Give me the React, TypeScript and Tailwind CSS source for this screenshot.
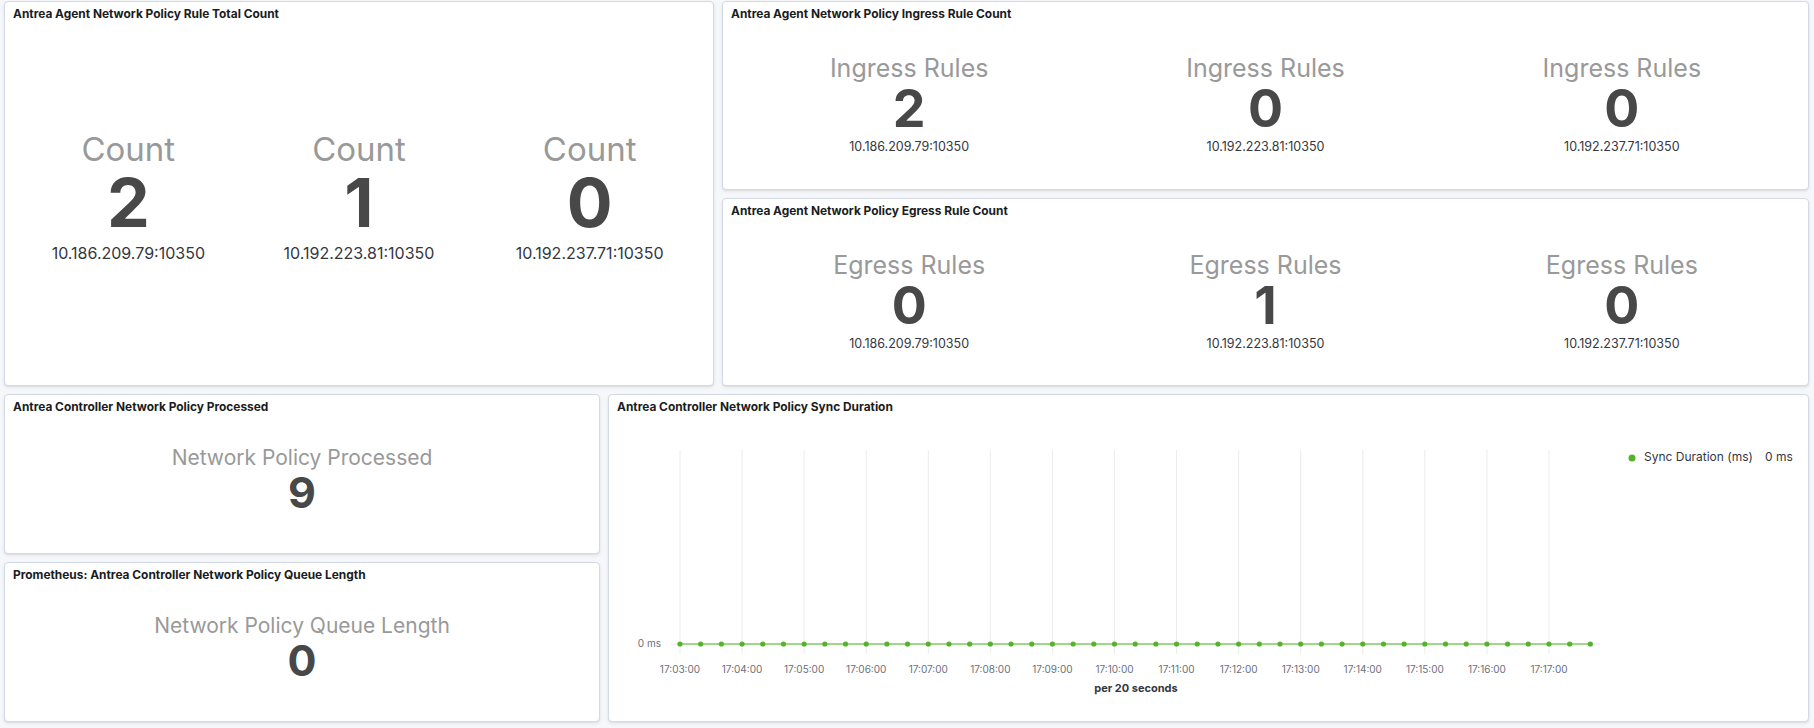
import React from "react";

const FONT = { fontFamily: "Inter, 'Noto Sans', sans-serif" };

function Panel({ title, children, className }: { title: string; children?: React.ReactNode; className?: string }) {
  return (
    <div
      className={
        "bg-white border border-[#d3dae6] rounded-[4px] shadow-[0_1px_2px_rgba(0,0,0,0.08),0_2px_4px_rgba(0,0,0,0.04)] flex flex-col overflow-hidden min-h-0 " +
        (className ?? "")
      }
    >
      <div className="px-[8px] pt-[4px] text-[11.9px] leading-[16px] font-bold text-[#1a1c21] whitespace-nowrap">{title}</div>
      {children}
    </div>
  );
}

type M = { value: string; ip: string };

function MetricRow({ label, items, big }: { label: string; items: M[]; big: boolean }) {
  return (
    <div className={"grid grid-cols-3 px-[8px] " + (big ? "pt-[111px]" : "pt-[34px]")}>
      {items.map((m, i) => (
        <div key={i} className="flex flex-col items-center">
          <div className={"leading-none text-[#999999] whitespace-nowrap " + (big ? "text-[33px]" : "text-[25px]")}>{label}</div>
          <div className={"leading-none font-bold text-[#484848] " + (big ? "text-[68px] mt-[2px]" : "text-[52px] mt-[2px]")}>{m.value}</div>
          <div className={"leading-none text-[#343741] whitespace-nowrap " + (big ? "text-[16px] mt-[9px]" : "text-[12.5px] mt-[6px]")}>{m.ip}</div>
        </div>
      ))}
    </div>
  );
}

function Single({ label, value }: { label: string; value: string }) {
  return (
    <div className="flex flex-col items-center pt-[32px]">
      <div className="leading-none text-[21px] text-[#999999] whitespace-nowrap">{label}</div>
      <div className="leading-none text-[43px] font-bold text-[#484848] mt-[3px]">{value}</div>
    </div>
  );
}

const IPS = ["10.186.209.79:10350", "10.192.223.81:10350", "10.192.237.71:10350"];

function Chart() {
  const x0 = 71;
  const minute = 62.07;
  const grid = Array.from({ length: 15 }, (_, i) => x0 + i * minute);
  const pts = Array.from({ length: 45 }, (_, j) => x0 + (j * minute) / 3);
  const labels = Array.from({ length: 15 }, (_, i) => `17:${String(3 + i).padStart(2, "0")}:00`);
  return (
    <svg width="1199" height="306" className="block" style={FONT}>
      {grid.map((x, i) => (
        <line key={i} x1={x} x2={x} y1={35} y2={239} stroke="#ececec" strokeWidth={1} />
      ))}
      <line x1={62} x2={991} y1={229} y2={229} stroke="#e6e6e6" strokeWidth={1} />
      <line x1={pts[0]} x2={pts[pts.length - 1]} y1={229} y2={229} stroke="#86cd62" strokeWidth={1.5} />
      {pts.map((x, j) => (
        <circle key={j} cx={x} cy={229} r={2.6} fill="#54b32a" />
      ))}
      <text x={52} y={229} textAnchor="end" dominantBaseline="middle" fontSize={10} fill="#69707d">
        0 ms
      </text>
      {grid.map((x, i) => (
        <text key={i} x={x} y={255} textAnchor="middle" dominantBaseline="middle" fontSize={10} fill="#69707d">
          {labels[i]}
        </text>
      ))}
      <text x={527} y={274} textAnchor="middle" dominantBaseline="middle" fontSize={11} fontWeight={700} fill="#343741">
        per 20 seconds
      </text>
      <circle cx={1023} cy={43} r={3.5} fill="#54b32a" />
      <text x={1035} y={43} dominantBaseline="middle" fontSize={12} fill="#343741">
        Sync Duration (ms)
      </text>
      <text x={1156} y={43} dominantBaseline="middle" fontSize={12} fill="#343741">
        0 ms
      </text>
    </svg>
  );
}

export default function App() {
  return (
    <div className="w-[1814px] h-[728px] bg-[#f5f7fa] pt-[1px] pl-[4px] pr-[5px] flex flex-col gap-[8px] overflow-hidden" style={FONT}>
      <div className="grid grid-cols-[710px_1fr] gap-[8px] h-[385px] shrink-0">
        <Panel title="Antrea Agent Network Policy Rule Total Count">
          <MetricRow
            label="Count"
            big
            items={[
              { value: "2", ip: IPS[0] },
              { value: "1", ip: IPS[1] },
              { value: "0", ip: IPS[2] },
            ]}
          />
        </Panel>
        <div className="grid grid-rows-2 gap-[8px] min-h-0">
          <Panel title="Antrea Agent Network Policy Ingress Rule Count">
            <MetricRow
              label="Ingress Rules"
              big={false}
              items={[
                { value: "2", ip: IPS[0] },
                { value: "0", ip: IPS[1] },
                { value: "0", ip: IPS[2] },
              ]}
            />
          </Panel>
          <Panel title="Antrea Agent Network Policy Egress Rule Count">
            <MetricRow
              label="Egress Rules"
              big={false}
              items={[
                { value: "0", ip: IPS[0] },
                { value: "1", ip: IPS[1] },
                { value: "0", ip: IPS[2] },
              ]}
            />
          </Panel>
        </div>
      </div>
      <div className="grid grid-cols-[596px_1fr] gap-[8px] h-[328px] shrink-0">
        <div className="grid grid-rows-2 gap-[8px] min-h-0">
          <Panel title="Antrea Controller Network Policy Processed">
            <Single label="Network Policy Processed" value="9" />
          </Panel>
          <Panel title="Prometheus: Antrea Controller Network Policy Queue Length">
            <Single label="Network Policy Queue Length" value="0" />
          </Panel>
        </div>
        <Panel title="Antrea Controller Network Policy Sync Duration">
          <Chart />
        </Panel>
      </div>
    </div>
  );
}
